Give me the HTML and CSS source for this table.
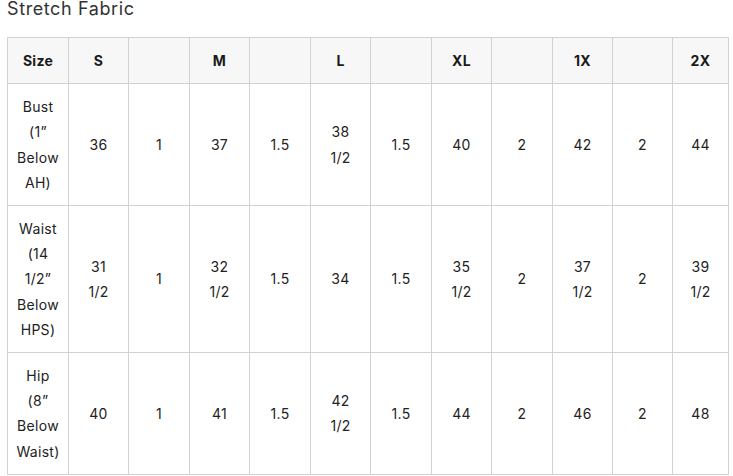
FILE: index.html
```html
<!DOCTYPE html>
<html>
<head>
<meta charset="utf-8">
<link rel="stylesheet" href="styles.css">
</head>
<body>
<div class="page">
  <h3 class="title">Stretch Fabric</h3>
  <table class="size-table">
    <colgroup>
      <col class="c61"><col class="c60"><col class="c61"><col class="c60"><col class="c61"><col class="c60">
      <col class="c61"><col class="c60"><col class="c61"><col class="c60"><col class="c60"><col class="c56">
    </colgroup>
    <thead>
      <tr><th>Size</th><th>S</th><th></th><th>M</th><th></th><th>L</th><th></th><th>XL</th><th></th><th>1X</th><th></th><th>2X</th></tr>
    </thead>
    <tbody>
      <tr><td>Bust<br>(1”<br>Below<br>AH)</td><td>36</td><td>1</td><td>37</td><td>1.5</td><td>38<br>1/2</td><td>1.5</td><td>40</td><td>2</td><td>42</td><td>2</td><td>44</td></tr>
      <tr><td>Waist<br>(14<br>1/2”<br>Below<br>HPS)</td><td>31<br>1/2</td><td>1</td><td>32<br>1/2</td><td>1.5</td><td>34</td><td>1.5</td><td>35<br>1/2</td><td>2</td><td>37<br>1/2</td><td>2</td><td>39<br>1/2</td></tr>
      <tr><td>Hip<br>(8”<br>Below<br>Waist)</td><td>40</td><td>1</td><td>41</td><td>1.5</td><td>42<br>1/2</td><td>1.5</td><td>44</td><td>2</td><td>46</td><td>2</td><td>48</td></tr>
    </tbody>
  </table>
</div>
</body>
</html>
```
FILE: styles.css
```css
html, body {
  margin: 0;
  padding: 0;
  background: #ffffff;
}
.page {
  padding-left: 7px;
  font-family: Inter, "Noto Sans", sans-serif;
  color: #222222;
}
.title {
  margin: 0;
  font-size: 18px;
  font-weight: 400;
  line-height: 17px;
  letter-spacing: 0.6px;
  color: #333333;
}
.size-table {
  margin-top: 20px;
  border-collapse: collapse;
  table-layout: fixed;
  width: 721px;
  font-size: 14px;
  line-height: 25.2px;
  letter-spacing: 0.3px;
}
.c61 { width: 61px; }
.c60 { width: 60px; }
.c56 { width: 56px; }
.size-table th,
.size-table td {
  border: 1px solid #d2d2d2;
  padding: 10px 6px;
  text-align: center;
  vertical-align: middle;
  white-space: nowrap;
}
.size-table th {
  background: #f7f7f7;
  font-weight: 700;
  color: #1a1a1a;
}
.size-table td {
  font-weight: 400;
}
```
